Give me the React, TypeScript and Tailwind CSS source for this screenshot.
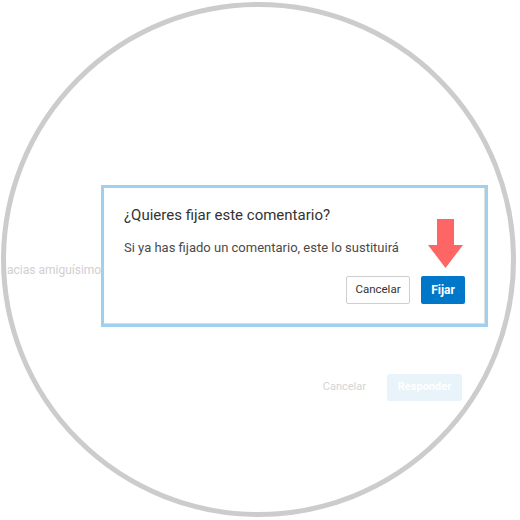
export default function App() {
  return (
    <div className="w-[520px] h-[520px] bg-white pt-[2px] pl-[1px] font-['Roboto',sans-serif]">
      <div className="w-[515px] h-[515px] rounded-full border-[5px] border-[#cccccc] overflow-hidden">
        <div className="relative w-full h-full flex flex-col">
          {/* background comment, faded */}
          <div className="pt-[255px] pl-[1px] text-[12px] leading-4 text-[#d3ced2] whitespace-nowrap">
            acias amiguísimo
          </div>
          <div className="mt-[96px] pr-[49px] flex items-center justify-end">
            <span className="text-[11px] text-[#d4d4d4] mr-[21px]">Cancelar</span>
            <div className="w-[75px] h-[27px] rounded-[3px] bg-[#e8f3fa] flex items-center justify-center text-[11px] font-bold text-white">
              Responder
            </div>
          </div>

          {/* dialog */}
          <div className="absolute left-[95px] top-[178px] w-[387px] h-[142px] border-[3px] border-[#9fd0ef] bg-white">
            <div className="relative h-full border-r border-b border-[#dddddd] pt-[17px] pl-[20px] pr-[19px] flex flex-col">
              <h2 className="text-[15px] leading-5 text-[#333333]">¿Quieres fijar este comentario?</h2>
              <p className="mt-[15px] text-[13px] leading-4 text-[#4a4a4a]">
                Si ya has fijado un comentario, este lo sustituirá
              </p>
              <div className="mt-[20px] flex justify-end gap-[11px]">
                <button className="w-[64px] h-[28px] border border-[#cfcfcf] rounded-[2px] bg-white text-[11.5px] text-[#333333]">
                  Cancelar
                </button>
                <button className="w-[44px] h-[28px] rounded-[2px] bg-[#0077c8] text-[12px] font-bold text-white">
                  Fijar
                </button>
              </div>
              <svg className="absolute left-[324px] top-[31px]" width="35" height="49" viewBox="0 0 35 49">
                <path d="M9 0H26V26H35L17.5 49L0 26H9Z" fill="#fe6565" />
              </svg>
            </div>
          </div>
        </div>
      </div>
    </div>
  );
}
